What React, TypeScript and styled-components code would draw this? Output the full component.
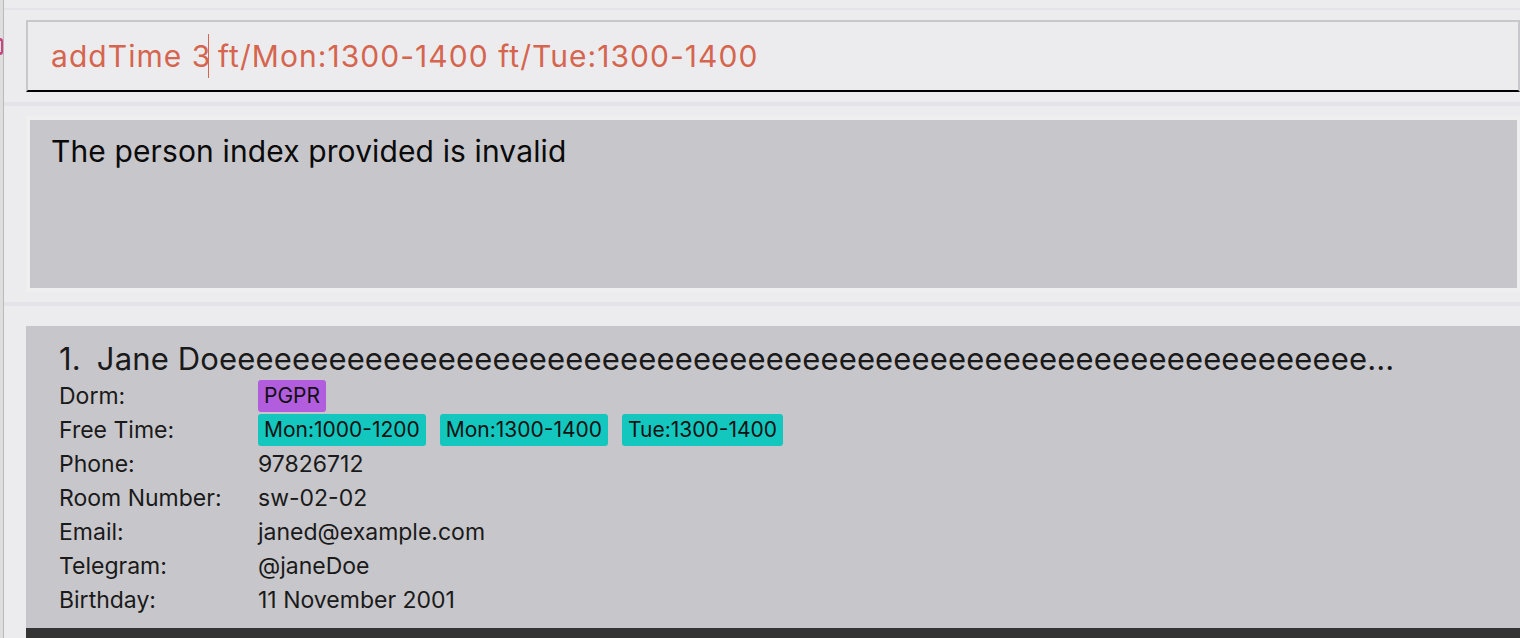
import React from 'react';
import styled, { createGlobalStyle } from 'styled-components';

const GlobalStyle = createGlobalStyle`
  html, body {
    margin: 0;
    padding: 0;
    background: #ececee;
    overflow: hidden;
  }
  * { box-sizing: border-box; }
`;

const Window = styled.div`
  display: flex;
  width: 1520px;
  height: 638px;
  font-family: 'Inter', 'Liberation Sans', sans-serif;
  background: #ececee;
  overflow: hidden;
`;

const LeftEdge = styled.div`
  width: 4px;
  flex: none;
  background: #dededf;
  border-right: 1px solid #b9b9bc;
  padding-top: 38px;
`;

/* sliver of a window behind, peeking through at the edge */
const PinkSliver = styled.div`
  width: 3px;
  height: 17px;
  border-top: 3px solid #c8457f;
  border-bottom: 3px solid #c8457f;
  border-right: 2px solid #c8457f;
  border-radius: 0 3px 3px 0;
`;

const Main = styled.div`
  flex: 1;
  display: flex;
  flex-direction: column;
  min-width: 0;
`;

const Stripe = styled.div<{ $top: number; $bottom: number; $h?: number }>`
  height: ${(p) => p.$h ?? 2}px;
  margin-top: ${(p) => p.$top}px;
  margin-bottom: ${(p) => p.$bottom}px;
  background: #e4e4e8;
`;

const CommandBox = styled.div`
  margin-left: 22px;
  height: 72px;
  border: 2px solid #c8c8cc;
  border-bottom-color: #000;
  display: flex;
  align-items: center;
  padding-left: 23px;
  color: #d6654f;
  font-size: 30px;
  letter-spacing: 1.05px;
  white-space: pre;
`;

const Caret = styled.span`
  display: inline-block;
  width: 0;
  height: 44px;
  margin-left: -3px;
  margin-right: -1px;
  border-left: 1.5px solid #d6654f;
  vertical-align: middle;
`;

const ResultFrame = styled.div`
  margin-left: 22px;
  padding: 4px 3px 4px 4px;
  background: #efeff0;
  height: 176px;
`;

const ResultBox = styled.div`
  height: 100%;
  background: #c7c6cb;
  padding: 13px 21px;
  font-size: 30px;
  letter-spacing: 0.12px;
  color: #0a0a0a;
`;

const Card = styled.div`
  margin-left: 22px;
  height: 302px;
  background: #c7c6cb;
  padding: 13px 33px 0;
  color: #1a1a1a;
`;

const NameLine = styled.div`
  font-size: 31px;
  line-height: 40px;
  letter-spacing: 0.15px;
  white-space: nowrap;
  display: flex;
  gap: 16px;
`;

const Field = styled.div`
  display: flex;
  align-items: center;
  height: 34px;
  font-size: 23px;
`;

const Label = styled.div`
  width: 199px;
  flex: none;
`;

const Tags = styled.div`
  display: flex;
  gap: 14px;
`;

const Tag = styled.span<{ $color: string }>`
  background: ${(p) => p.$color};
  border-radius: 3px;
  padding: 0 6px;
  height: 32px;
  line-height: 32px;
  font-size: 21px;
  color: #111;
`;

const BottomBar = styled.div`
  margin-left: 22px;
  flex: 1;
  background: #343434;
`;

const freeTimes = ['Mon:1000-1200', 'Mon:1300-1400', 'Tue:1300-1400'];

const fields: [string, string][] = [
  ['Phone:', '97826712'],
  ['Room Number:', 'sw-02-02'],
  ['Email:', 'janed@example.com'],
  ['Telegram:', '@janeDoe'],
  ['Birthday:', '11 November 2001'],
];

export default function App() {
  return (
    <>
      <GlobalStyle />
      <Window>
        <LeftEdge>
          <PinkSliver />
        </LeftEdge>
        <Main>
          <Stripe $top={8} $bottom={10} />
          <CommandBox>
            addTime 3<Caret /> ft/Mon:1300-1400 ft/Tue:1300-1400
          </CommandBox>
          <Stripe $top={10} $bottom={10} $h={4} />
          <ResultFrame>
            <ResultBox>The person index provided is invalid</ResultBox>
          </ResultFrame>
          <Stripe $top={10} $bottom={20} $h={4} />
          <Card>
            <NameLine>
              <span>1.</span>
              <span>Jane Doe{'e'.repeat(62)}...</span>
            </NameLine>
            <Field>
              <Label>Dorm:</Label>
              <Tags>
                <Tag $color="#b25ddd">PGPR</Tag>
              </Tags>
            </Field>
            <Field>
              <Label>Free Time:</Label>
              <Tags>
                {freeTimes.map((t) => (
                  <Tag key={t} $color="#13c7bf">
                    {t}
                  </Tag>
                ))}
              </Tags>
            </Field>
            {fields.map(([k, v]) => (
              <Field key={k}>
                <Label>{k}</Label>
                <span>{v}</span>
              </Field>
            ))}
          </Card>
          <BottomBar />
        </Main>
      </Window>
    </>
  );
}
